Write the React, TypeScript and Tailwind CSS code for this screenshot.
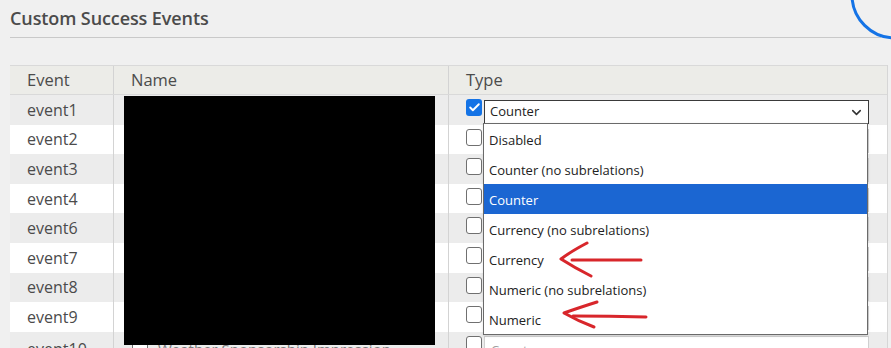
import { ChevronDown, Check } from "lucide-react";

const events = [
  "event1",
  "event2",
  "event3",
  "event4",
  "event6",
  "event7",
  "event8",
  "event9",
];

const options = [
  "Disabled",
  "Counter (no subrelations)",
  "Counter",
  "Currency (no subrelations)",
  "Currency",
  "Numeric (no subrelations)",
  "Numeric",
];

const Box = ({ checked }: { checked?: boolean }) =>
  checked ? (
    <span className="flex h-[17px] w-[16px] items-center justify-center rounded-[3px] bg-[#1473e6]">
      <Check size={13} strokeWidth={3.5} className="text-white" />
    </span>
  ) : (
    <span className="h-[17px] w-[16px] rounded-[3px] border border-[#707070] bg-white" />
  );

export default function App() {
  return (
    <div className="relative h-[348px] w-[891px] overflow-hidden bg-[#f0f0f0] font-['Open_Sans',sans-serif] text-[#4b4b4b]">
      <div className="px-[10px]">
        <h2 className="border-b border-[#c9c9c9] pb-[5px] pt-[4px] text-[18px] font-semibold leading-[28px] tracking-[-0.1px]">
          Custom Success Events
        </h2>
      </div>

      <div className="ml-[10px] mt-[27px] w-[878px] border-r border-[#d6d6d6]">
        {/* header */}
        <div className="grid h-[30px] grid-cols-[103px_335px_440px] border-y border-[#d9d9d9] bg-[#ecece8] text-[16.5px]">
          <div className="flex items-center pl-[17px]">Event</div>
          <div className="flex items-center border-l border-[#d3d3d3] pl-[17px]">Name</div>
          <div className="flex items-center border-l border-[#d3d3d3] pl-[17px]">Type</div>
        </div>

        {events.map((ev, i) => (
          <div
            key={ev}
            className={`grid h-[29.6px] grid-cols-[103px_335px_440px] text-[16px] ${
              i % 2 === 0 ? "bg-[#ececec]" : "bg-white"
            }`}
          >
            <div className="flex items-center pl-[17px]">{ev}</div>
            <div className="border-l border-[#d3d3d3]" />
            <div className="flex items-start border-l border-[#d3d3d3] pl-[17px] pt-[4px]">
              <Box checked={i === 0} />
              {i === 0 ? (
                <div className="ml-[2px] mt-[1px] flex h-[24px] w-[385px] items-center justify-between border border-[#3a3a3a] bg-white pl-[5px] pr-[4px] text-[13px] text-[#222]">
                  <span>Counter</span>
                  <ChevronDown size={15} strokeWidth={2.5} className="text-[#333]" />
                </div>
              ) : (
                <div className="ml-[2px] h-[24px] w-[385px] border border-[#d0d0d0] bg-white" />
              )}
            </div>
          </div>
        ))}

        {/* event10 */}
        <div className="grid h-[30px] grid-cols-[103px_335px_440px] bg-[#ececec] text-[16px]">
          <div className="flex items-start pl-[17px] pt-[5px]">event10</div>
          <div className="flex items-start gap-[10px] border-l border-[#d3d3d3] pl-[18px] pt-[6px]">
            <Box />
            <span className="text-[15px] text-[#7a7a7a]">Weather Sponsorship Impression</span>
          </div>
          <div className="flex items-start border-l border-[#d3d3d3] pl-[17px] pt-[4px]">
            <Box />
            <div className="ml-[2px] flex h-[24px] w-[385px] items-center border border-[#d0d0d0] bg-white pl-[6px] pt-[6px] text-[13px] text-[#a0a0a0]">
              Counter
            </div>
          </div>
        </div>
      </div>

      {/* redaction */}
      <div className="absolute left-[124px] top-[96px] h-[249px] w-[311px] bg-black" />

      {/* open dropdown list */}
      <div className="absolute left-[483px] top-[123px] w-[385px] border border-[#6a6a6a] bg-white text-[13px] text-[#222] shadow-sm">
        {options.map((o) => (
          <div
            key={o}
            className={`flex h-[30px] items-center pl-[5px] pt-[3px] ${
              o === "Counter" ? "bg-[#1b66d2] text-white" : ""
            }`}
          >
            {o}
          </div>
        ))}
      </div>

      {/* blue ring */}
      <svg className="absolute left-[840px] top-[-10px]" width="60" height="60">
        <circle cx="55" cy="5" r="43" fill="none" stroke="#1473e6" strokeWidth="3" />
      </svg>

      {/* red arrows */}
      <svg className="pointer-events-none absolute inset-0" width="891" height="348">
        <g fill="none" stroke="#d8262b" strokeWidth="3" strokeLinecap="round" strokeLinejoin="round">
          <path d="M641 260 L572 260" />
          <path d="M587 243 Q570 252 561 259 Q575 268 591 276" />
          <path d="M646 317 Q610 316 573 316" />
          <path d="M597 302 Q578 308 564 313 Q578 321 594 327" />
        </g>
      </svg>
    </div>
  );
}
